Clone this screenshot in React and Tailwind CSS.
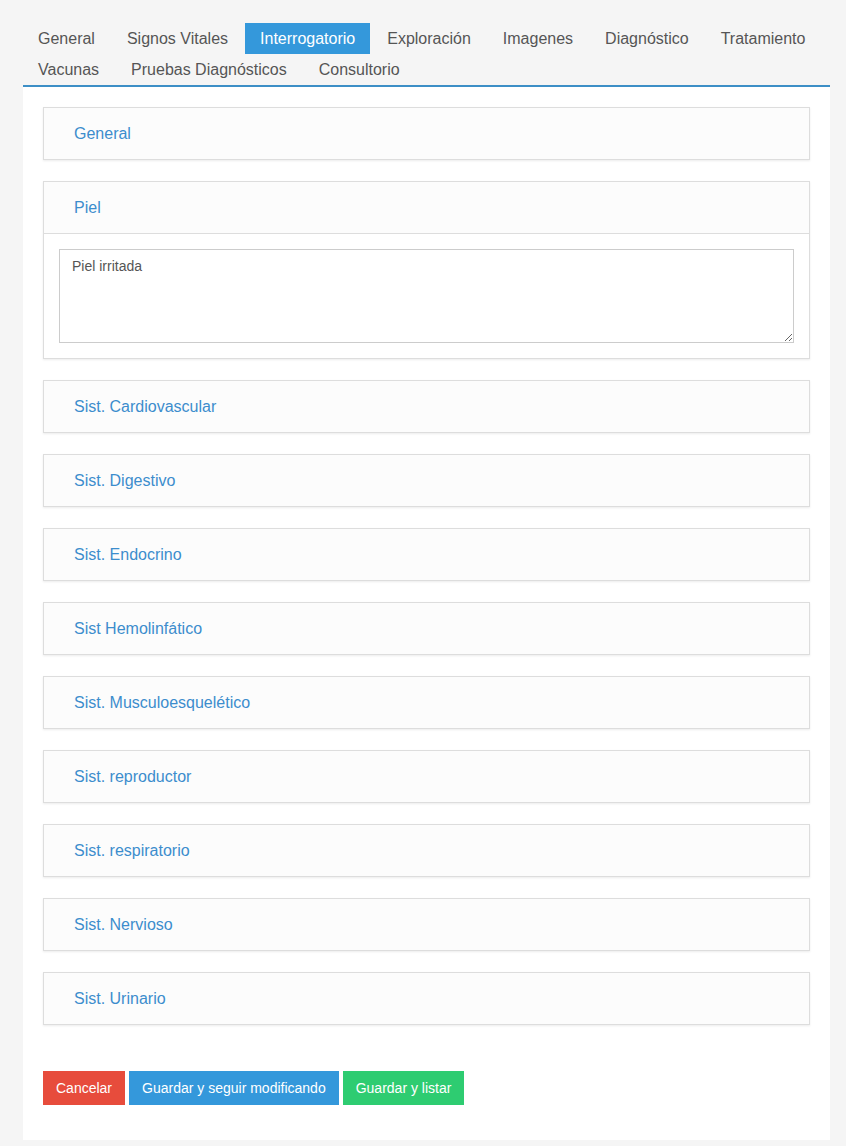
import React, { useState } from 'react';

const tabs = [
  'General',
  'Signos Vitales',
  'Interrogatorio',
  'Exploración',
  'Imagenes',
  'Diagnóstico',
  'Tratamiento',
  'Vacunas',
  'Pruebas Diagnósticos',
  'Consultorio',
];

const sections = [
  'General',
  'Piel',
  'Sist. Cardiovascular',
  'Sist. Digestivo',
  'Sist. Endocrino',
  'Sist Hemolinfático',
  'Sist. Musculoesquelético',
  'Sist. reproductor',
  'Sist. respiratorio',
  'Sist. Nervioso',
  'Sist. Urinario',
];

const Panel = ({ title, open, onToggle, children }) => (
  <div className="border border-[#dddddd] bg-white shadow-[0_1px_2px_rgba(0,0,0,0.08)]">
    <button
      onClick={onToggle}
      className="block w-full h-[51px] px-[30px] text-left text-[16px] text-[#3c8dcd] bg-[#fcfcfc]"
    >
      {title}
    </button>
    {open && <div className="border-t border-[#dddddd] p-[15px]">{children}</div>}
  </div>
);

const App = () => {
  const [active, setActive] = useState('Interrogatorio');
  const [openPanel, setOpenPanel] = useState('Piel');
  const [piel, setPiel] = useState('Piel irritada');

  return (
    <div className="min-h-[1146px] bg-[#f5f5f5] pt-[23px] pl-[23px] pr-[16px] pb-[6px] font-['Liberation_Sans',Arial,sans-serif]">
      <div className="flex flex-wrap gap-x-[2px] border-b-2 border-[#3d8fc6]">
        {tabs.map((t) => (
          <button
            key={t}
            onClick={() => setActive(t)}
            className={
              active === t
                ? 'h-[31px] px-[15px] text-[16px] bg-[#3498db] text-white'
                : 'h-[31px] px-[15px] text-[16px] text-[#555555]'
            }
          >
            {t}
          </button>
        ))}
      </div>

      <div className="bg-white px-[20px] pt-[20px] pb-[35px]">
        <div className="flex flex-col gap-[21px]">
          {sections.map((s) => (
            <Panel
              key={s}
              title={s}
              open={openPanel === s}
              onToggle={() => setOpenPanel(openPanel === s ? null : s)}
            >
              <textarea
                value={piel}
                onChange={(e) => setPiel(e.target.value)}
                className="block w-full h-[94px] border border-[#cccccc] px-[12px] py-[6px] text-[14px] text-[#555555] outline-none"
              />
            </Panel>
          ))}
        </div>

        <div className="flex gap-[4px] mt-[46px]">
          <button className="h-[34px] px-[13px] text-[14px] text-white bg-[#e74c3c]">Cancelar</button>
          <button className="h-[34px] px-[13px] text-[14px] text-white bg-[#3498db]">
            Guardar y seguir modificando
          </button>
          <button className="h-[34px] px-[13px] text-[14px] text-white bg-[#2ecc71]">Guardar y listar</button>
        </div>
      </div>
    </div>
  );
};

export default App;
